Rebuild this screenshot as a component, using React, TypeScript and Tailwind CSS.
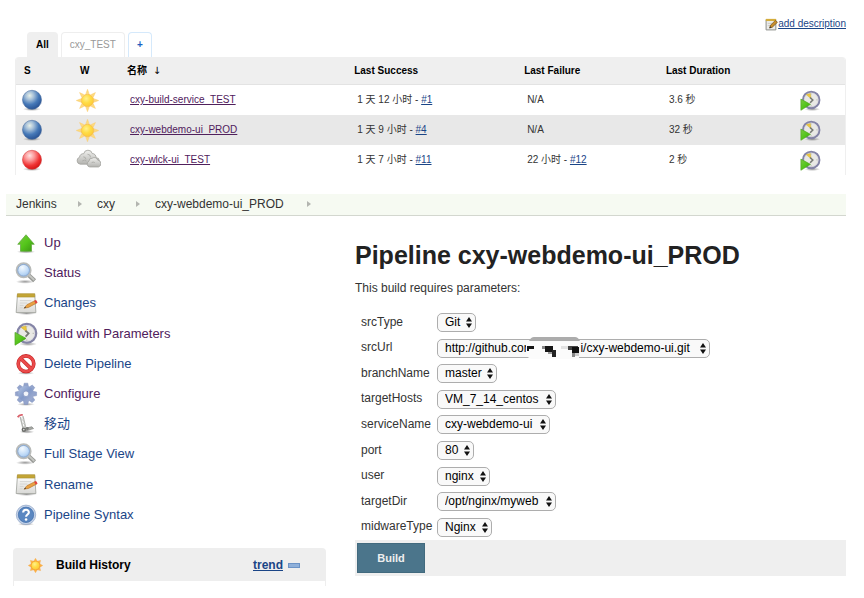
import type { ReactNode } from 'react';

const link = 'text-[#1a4587]';
const visited = 'text-[#50205c]';

function Defs() {
  return (
    <svg className="absolute size-0" aria-hidden="true">
      <defs>
        <radialGradient id="ballBlue" cx="0.38" cy="0.28" r="0.72">
          <stop offset="0" stopColor="#e9f1e8" />
          <stop offset="0.3" stopColor="#a5bfd8" />
          <stop offset="0.65" stopColor="#4679b8" />
          <stop offset="1" stopColor="#2a5596" />
        </radialGradient>
        <radialGradient id="ballRed" cx="0.38" cy="0.28" r="0.74">
          <stop offset="0" stopColor="#ffe2e2" />
          <stop offset="0.35" stopColor="#fb9494" />
          <stop offset="0.7" stopColor="#f03536" />
          <stop offset="1" stopColor="#d41414" />
        </radialGradient>
        <radialGradient id="sunFill" cx="0.4" cy="0.35" r="0.7">
          <stop offset="0" stopColor="#fff08c" />
          <stop offset="0.5" stopColor="#ffdc45" />
          <stop offset="1" stopColor="#fcc636" />
        </radialGradient>
        <linearGradient id="cloudFill" x1="0" y1="0" x2="0" y2="1">
          <stop offset="0" stopColor="#f0f0ee" />
          <stop offset="1" stopColor="#b4b4b0" />
        </linearGradient>
        <radialGradient id="lensFill" cx="0.4" cy="0.3" r="0.8">
          <stop offset="0" stopColor="#f4faff" />
          <stop offset="0.6" stopColor="#bcd8f6" />
          <stop offset="1" stopColor="#8ab4e6" />
        </radialGradient>
        <linearGradient id="greenFill" x1="0" y1="0" x2="1" y2="1">
          <stop offset="0" stopColor="#7cc845" />
          <stop offset="0.5" stopColor="#55c61b" />
          <stop offset="1" stopColor="#3a9312" />
        </linearGradient>
        <linearGradient id="paperFill" x1="0" y1="0" x2="0" y2="1">
          <stop offset="0" stopColor="#ffffff" />
          <stop offset="1" stopColor="#d9d9d6" />
        </linearGradient>
        <linearGradient id="gearFill" x1="0" y1="0" x2="1" y2="1">
          <stop offset="0" stopColor="#b5c6e4" />
          <stop offset="0.5" stopColor="#8299c8" />
          <stop offset="1" stopColor="#aab3d2" />
        </linearGradient>
        <radialGradient id="shadow">
          <stop offset="0" stopColor="#000" stopOpacity="0.4" />
          <stop offset="1" stopColor="#000" stopOpacity="0" />
        </radialGradient>
      </defs>
    </svg>
  );
}

function Icon({ children, className = 'size-[22px]' }: { children: ReactNode; className?: string }) {
  return (
    <svg viewBox="0 0 24 24" className={`block shrink-0 ${className}`} aria-hidden="true">
      {children}
    </svg>
  );
}

function Ball({ color }: { color: 'blue' | 'red' }) {
  return (
    <Icon>
      <ellipse cx="12" cy="22" rx="10" ry="2" fill="url(#shadow)" />
      <circle
        cx="12"
        cy="11.8"
        r="10.4"
        fill={color === 'blue' ? 'url(#ballBlue)' : 'url(#ballRed)'}
        stroke={color === 'blue' ? '#4b6d9c' : '#cf3a3a'}
        strokeWidth="0.6"
      />
    </Icon>
  );
}

function Sun({ className }: { className?: string }) {
  return (
    <Icon className={className}>
      {[0, 45, 90, 135, 180, 225, 270, 315].map((a) => (
        <path key={a} d="M10.3 5 12 0.3 13.7 5z" fill="#fddc7c" stroke="#fbcb75" strokeWidth="0.5" transform={`rotate(${a} 12 12)`} />
      ))}
      <circle cx="12" cy="12" r="6.5" fill="url(#sunFill)" stroke="#f9bb48" strokeWidth="0.8" />
    </Icon>
  );
}

function SmallSun() {
  return (
    <Icon className="size-[15px]">
      {[0, 45, 90, 135, 180, 225, 270, 315].map((a) => (
        <path key={a} d="M9 5.5 12 0.5l3 5z" fill="#fbb64a" stroke="#f6a03a" strokeWidth="0.6" transform={`rotate(${a} 12 12)`} />
      ))}
      <circle cx="12" cy="12" r="7" fill="url(#sunFill)" stroke="#f5a030" strokeWidth="1.4" />
    </Icon>
  );
}

function Cloud() {
  return (
    <Icon className="size-[25px]">
      <g fill="url(#cloudFill)" stroke="#a3a39f" strokeWidth="0.8">
        <path d="M4 15.5a3.4 3.4 0 0 1-.6-6.6 3.5 3.5 0 0 1 4-3.4 4.2 4.2 0 0 1 8.2-.2 3.6 3.6 0 0 1 3.6 4 3 3 0 0 1 .2 6.2z" />
        <path d="M13.2 18.2a2.9 2.9 0 0 1-.8-5.5 3 3 0 0 1 3.2-2.9 3.4 3.4 0 0 1 5.2 1.8 3.4 3.4 0 0 1 .8 6.6z" />
      </g>
      <path d="M7 8.5a2.5 2.5 0 0 1 2.5 2.5M11 6a3 3 0 0 1 3 3M6 12.5a3 3 0 0 1 4 0M15 14a3 3 0 0 1 3 0" fill="none" stroke="#a9a9a5" strokeWidth="0.8" />
    </Icon>
  );
}

function ClockPlay({ className = 'size-[21px]' }: { className?: string }) {
  return (
    <Icon className={className}>
      <ellipse cx="14" cy="22" rx="9" ry="2" fill="url(#shadow)" />
      <circle cx="12.8" cy="11.3" r="9.4" fill="#e9e9e5" stroke="#8484a6" strokeWidth="2.3" />
      <circle cx="12.8" cy="11.3" r="7.9" fill="none" stroke="#d2d2de" strokeWidth="0.7" />
      <path d="M7 5.2 12 4l.8 6z" fill="#edc93f" stroke="#c9ab3a" strokeWidth="0.5" />
      <path d="M11.4 8.6 14.6 11.4l-3 3.2" fill="none" stroke="#777a74" strokeWidth="1.8" />
      <path d="M18.6 11.3h1.4M12.8 17.4v1.4M12.8 4v1.2" stroke="#aaaaa5" strokeWidth="0.8" />
      <path d="M1 10.4 12 16.4 1 23.2z" fill="url(#greenFill)" stroke="#4ba51c" strokeWidth="0.7" />
    </Icon>
  );
}

function UpArrow() {
  return (
    <Icon>
      <ellipse cx="12" cy="21.5" rx="10" ry="2" fill="url(#shadow)" />
      <path d="M12 3 21 13.4h-3V21H6v-7.6H3z" fill="url(#greenFill)" stroke="#5fa63d" strokeWidth="0.8" />
    </Icon>
  );
}

function Magnifier() {
  return (
    <Icon>
      <ellipse cx="11" cy="21.5" rx="10" ry="2.2" fill="url(#shadow)" />
      <path d="m15 14.4 6.4 6" stroke="#979995" strokeWidth="4.6" />
      <path d="m15 14 6 5.6" stroke="#c5c7c3" strokeWidth="2" />
      <circle cx="9.4" cy="9" r="7.4" fill="url(#lensFill)" stroke="#b9bbb9" strokeWidth="2.6" />
      <circle cx="9.4" cy="9" r="6.4" fill="none" stroke="#86abdc" strokeWidth="1" />
    </Icon>
  );
}

function Notepad({ className = 'size-[23px]' }: { className?: string }) {
  return (
    <Icon className={className}>
      <ellipse cx="12" cy="22.4" rx="11" ry="1.5" fill="url(#shadow)" />
      <path d="M2.6 2.6h18l1.2 18.8H1.2z" fill="url(#paperFill)" stroke="#a3a5a0" strokeWidth="0.9" />
      <path d="M2.6 1.7h18v3.6H2.3z" fill="#c3a536" stroke="#a88d2b" strokeWidth="0.6" />
      <path d="M5 9h12M5 11.5h8M5 14h4M5 16.5h3" stroke="#d0d0cd" strokeWidth="0.9" />
      <path d="m9.4 16.9 3-3.6 8.8-4.5 1.6 2.6-8.8 4.7z" fill="#e9a143" stroke="#b5762b" strokeWidth="0.7" />
      <path d="m20 9.4 2-1.1 1.6 2.6-2 1.1z" fill="#e04040" />
      <path d="m9.2 17 1.6-1.8.8 1.3z" fill="#444" />
    </Icon>
  );
}

function EditNote() {
  return (
    <Icon className="size-[13px]">
      <path d="M2 3h18v19H2z" fill="#ececea" stroke="#8b8d88" strokeWidth="1.8" />
      <path d="M1.5 1.6h19v4h-19z" fill="#d4ad3c" />
      <path d="M5 10h8M5 14h5" stroke="#c4c4c0" strokeWidth="1.4" />
      <path d="m8.5 18.5 1.6-5L19 4.5l4 3.4-9.4 9z" fill="#c98f2e" stroke="#6f4f1c" strokeWidth="1.3" />
      <path d="m8.2 19 1.2-3.6 2.6 2.2z" fill="#333" />
    </Icon>
  );
}

function NoEntry() {
  return (
    <Icon>
      <ellipse cx="12" cy="22" rx="9" ry="1.8" fill="url(#shadow)" />
      <circle cx="12" cy="11.7" r="8.5" fill="#fff" stroke="#c62323" strokeWidth="4" />
      <path d="m6 5.8 12 11.8" stroke="#c62323" strokeWidth="4" />
      <circle cx="12" cy="11.7" r="8.5" fill="none" stroke="#ea4b4b" strokeWidth="2.7" />
      <path d="m6 5.8 12 11.8" stroke="#ea4b4b" strokeWidth="2.8" />
    </Icon>
  );
}

function Gear() {
  return (
    <Icon className="size-[24px]">
      <ellipse cx="12" cy="22.3" rx="9" ry="1.6" fill="url(#shadow)" />
      {[0, 45, 90, 135].map((a) => (
        <path key={a} d="M10.2 1.2h3.6l1 5v11.4l-1 4.8h-3.6l-1-4.8V6.2z" fill="#93a4cc" stroke="#8293bf" strokeWidth="0.5" transform={`rotate(${a} 12 11.8)`} />
      ))}
      <circle cx="12" cy="11.8" r="7.8" fill="url(#gearFill)" />
      <circle cx="12" cy="11.8" r="2.8" fill="#f1f4fa" stroke="#8697c2" strokeWidth="0.8" />
    </Icon>
  );
}

function HandTruck() {
  return (
    <Icon>
      <ellipse cx="13" cy="20.5" rx="8" ry="2" fill="url(#shadow)" />
      <path d="M5.8 4.4 9 17.6M8.6 3.4 11.6 16" fill="none" stroke="#b3b5b1" strokeWidth="1.6" />
      <path d="m6.8 8 3-.8M7.8 12l3-.8M8.6 15.4l3-.8" stroke="#c9cac7" strokeWidth="1.2" />
      <path d="M3 4.6Q4.6 1.6 8.4 2.2" fill="none" stroke="#d9606a" strokeWidth="2" />
      <path d="m9.6 17 8.8-2 1.8 2-9.6 2.8z" fill="#a8aaa6" stroke="#7d7f7b" strokeWidth="0.7" />
      <circle cx="9.6" cy="18.2" r="2.4" fill="#6b6d69" />
      <circle cx="9.6" cy="18.2" r="0.9" fill="#ddd" />
      <circle cx="13.4" cy="17" r="1.6" fill="#777975" />
    </Icon>
  );
}

function Help() {
  return (
    <Icon>
      <ellipse cx="12" cy="22" rx="9" ry="1.8" fill="url(#shadow)" />
      <circle cx="12" cy="11.8" r="10.6" fill="#c5d3e8" stroke="#93a7c8" strokeWidth="0.8" />
      <circle cx="12" cy="11.8" r="8.4" fill="#5a87c1" stroke="#3f6dab" strokeWidth="0.8" />
      <path d="M8.9 9.4c0-4.2 6.4-4 6.2-.2-.1 2.3-3 2.3-3 4.8" fill="none" stroke="#fff" strokeWidth="2.3" />
      <circle cx="12.1" cy="17" r="1.4" fill="#fff" />
    </Icon>
  );
}

type Job = { ok: boolean; sunny: boolean; name: string; since: string; run: string; fail: string; failRun?: string; took: string };

const jobs: Job[] = [
  { ok: true, sunny: true, name: 'cxy-build-service_TEST', since: '1 天 12 小时', run: '#1', fail: 'N/A', took: '3.6 秒' },
  { ok: true, sunny: true, name: 'cxy-webdemo-ui_PROD', since: '1 天 9 小时', run: '#4', fail: 'N/A', took: '32 秒' },
  { ok: false, sunny: false, name: 'cxy-wlck-ui_TEST', since: '1 天 7 小时', run: '#11', fail: '22 小时', failRun: '#12', took: '2 秒' },
];

function JobTable() {
  return (
    <table className="w-full table-fixed border-separate border-spacing-0 overflow-hidden rounded-t-[4px] border-x border-[#efefef] text-left text-[10px] leading-[14px] text-[#333]">
      <colgroup>
        <col className="w-[6.4%]" />
        <col className="w-[7%]" />
        <col className="w-[27.4%]" />
        <col className="w-[20.5%]" />
        <col className="w-[17.1%]" />
        <col className="w-[16.2%]" />
        <col />
      </colgroup>
      <thead className="bg-[#efefef] text-black">
        <tr className="h-[28px] *:border-b *:border-[#e3e3e3] *:p-0 *:font-bold">
          <th className="pl-[8px]!">S</th>
          <th className="pl-[11px]!">W</th>
          <th>名称 &nbsp;<span className="font-['DejaVu_Sans'] font-normal">↓</span></th>
          <th>Last Success</th>
          <th>Last Failure</th>
          <th>Last Duration</th>
          <th><span className="sr-only" /></th>
        </tr>
      </thead>
      <tbody>
        {jobs.map((j) => (
          <tr key={j.name} className="h-[30px] even:bg-[#e8e8e8] *:p-0">
            <td className="pl-[5px]!"><Ball color={j.ok ? 'blue' : 'red'} /></td>
            <td className="pl-[7px]!">{j.sunny ? <Sun className="size-[23px]" /> : <Cloud />}</td>
            <td className="pl-[3px]!"><a href="#job" className={`${visited} underline`}>{j.name}</a></td>
            <td className="pl-[3px]!">{j.since} - <a href="#run" className={`${link} underline`}>{j.run}</a></td>
            <td className="pl-[3px]!">
              {j.fail}
              {j.failRun && <> - <a href="#run" className={`${link} underline`}>{j.failRun}</a></>}
            </td>
            <td className="pl-[3px]!">{j.took}</td>
            <td className="pl-0!">
              <button type="button" aria-label="Build" className="mr-[24px] ml-auto block"><ClockPlay /></button>
            </td>
          </tr>
        ))}
      </tbody>
    </table>
  );
}

const tasks = [
  { label: 'Up', icon: <UpArrow />, seen: true },
  { label: 'Status', icon: <Magnifier />, seen: true },
  { label: 'Changes', icon: <Notepad />, seen: false },
  { label: 'Build with Parameters', icon: <ClockPlay className="size-[24px]" />, seen: true },
  { label: 'Delete Pipeline', icon: <NoEntry />, seen: false },
  { label: 'Configure', icon: <Gear />, seen: true },
  { label: '移动', icon: <HandTruck />, seen: false },
  { label: 'Full Stage View', icon: <Magnifier />, seen: false },
  { label: 'Rename', icon: <Notepad />, seen: false },
  { label: 'Pipeline Syntax', icon: <Help />, seen: false },
];

const params = [
  { name: 'srcType', value: 'Git', width: 'w-[39px]' },
  { name: 'srcUrl', value: 'http://github.com/' + '\u00a0'.repeat(13) + 'i/cxy-webdemo-ui.git', width: 'w-[273px]' },
  { name: 'branchName', value: 'master', width: 'w-[60px]' },
  { name: 'targetHosts', value: 'VM_7_14_centos', width: 'w-[119px]' },
  { name: 'serviceName', value: 'cxy-webdemo-ui', width: 'w-[113px]' },
  { name: 'port', value: '80', width: 'w-[37px]' },
  { name: 'user', value: 'nginx', width: 'w-[53px]' },
  { name: 'targetDir', value: '/opt/nginx/myweb', width: 'w-[119px]' },
  { name: 'midwareType', value: 'Nginx', width: 'w-[55px]' },
];

function Mosaic() {
  return (
    <svg viewBox="0 0 56 22" className="pointer-events-none absolute top-[-2px] left-[89px] h-[22px] w-[56px]" aria-hidden="true">
      <path d="M0 5h50l3 2v15H5l-5-3z" fill="#fbfbfb" />
      <path d="M3 4q2-4 5-4h41q3 0 5 4z" fill="#acacac" />
      <path d="M1 9h7v3H3v2H1z" fill="#151515" />
      <path d="M16 9h5v3h-5z" fill="#888" />
      <path d="M19 9h8v6h-8z" fill="#151515" />
      <path d="M26 13h4v7h-4z" fill="#222" />
      <path d="M22 15h4v2h-4z" fill="#999" />
      <path d="M35 9h7v3h-7z" fill="#e2e2e2" />
      <path d="M42 9h10v4H42z" fill="#444" />
      <path d="M46 10h7v6h-7z" fill="#111" />
      <path d="M46 16h3v4h-3z" fill="#888" />
      <path d="M49 16h4v3h-4z" fill="#ccc" />
    </svg>
  );
}

function Separator() {
  return (
    <svg viewBox="0 0 4 6" className="h-[6px] w-[4px]" aria-hidden="true">
      <path d="M0 0 4 3 0 6z" fill="#b3b5b0" />
    </svg>
  );
}

export default function App() {
  return (
    <div className="bg-white pb-[10px] font-['Liberation_Sans','Noto_Sans_CJK_SC',sans-serif] text-[12px] text-[#333]">
      <Defs />
      <section className="pt-[17px] pr-[18px] pl-[15px]">
        <div className="flex justify-end">
          <a href="#description" className={`flex items-center text-[10px] leading-[14px] ${link}`}>
            <EditNote />
            <span className="underline">add description</span>
          </a>
        </div>
        <nav className="mt-[1px] flex gap-[3px] pl-[12px] text-[10px] leading-[25px]" aria-label="Views">
          <a href="#all" className="rounded-t-[4px] bg-[#efefef] px-[9px] font-bold text-black">All</a>
          <a href="#test" className="rounded-t-[4px] border border-b-0 border-[#eee] px-[8px] leading-[24px] text-[#999]">cxy_TEST</a>
          <a href="#new" className="rounded-t-[4px] border border-b-0 border-[#d5e9fb] px-[8px] leading-[24px] font-bold text-[#1d5fc0]">+</a>
        </nav>
        <JobTable />
      </section>

      <nav className="mt-[19px] mr-[18px] ml-[6px] flex h-[22px] items-center border-b border-[#d3d7cf] bg-[#f6faf2] pb-[2px] pl-[10px] text-[#333]" aria-label="Breadcrumb">
        <a href="#jenkins" className="w-[62px]">Jenkins</a>
        <Separator />
        <a href="#cxy" className="ml-[15px] w-[39px]">cxy</a>
        <Separator />
        <a href="#job" className="ml-[15px] w-[152px]">cxy-webdemo-ui_PROD</a>
        <Separator />
      </nav>

      <div className="mr-[18px] flex gap-[29px]">
        <aside className="w-[326px] shrink-0 pt-[12px] pl-[13px]">
          <ul className="grid h-[302px] auto-rows-fr">
            {tasks.map((t) => (
              <li key={t.label} className="flex items-center">
                <a href="#task" className={`flex items-center gap-[5px] text-[13px] leading-[18px] ${t.seen ? visited : link}`}>
                  <span className="flex w-[26px] justify-center">{t.icon}</span>
                  {t.label}
                </a>
              </li>
            ))}
          </ul>
          <div className="mt-[18px] rounded-t-[4px] border border-b-0 border-[#eee]">
            <div className="flex h-[32px] items-center bg-[#eee] pr-[25px] pl-[14px] font-bold">
              <SmallSun />
              <h2 className="ml-[13px] flex-1 text-black">Build History</h2>
              <a href="#trend" className={`${link} underline`}>trend</a>
              <button type="button" aria-label="Collapse" className="ml-[5px] h-[5px] w-[12px] border border-[#6c93c6] bg-[#8fb0da]" />
            </div>
            <div className="h-[5px]" />
          </div>
        </aside>

        <main className="min-w-0 flex-1 pt-[22px]">
          <h1 className="text-[25px] leading-[34px] font-bold text-[#222]">Pipeline cxy-webdemo-ui_PROD</h1>
          <p className="mt-[8px] leading-[16px]">This build requires parameters:</p>
          <form>
            <div className="mt-[14px] grid h-[230px] auto-rows-fr pl-[6px]">
              {params.map((p) => (
                <div key={p.name} className="flex items-center">
                  <label htmlFor={p.name} className="w-[76px] pb-[2px]">{p.name}</label>
                  <div className="relative">
                    <select
                      id={p.name}
                      className={`block h-[19px] appearance-none rounded-[5px] border border-[#adadad] bg-[#f9f9f9] pl-[7px] text-[12px] leading-[17px] text-black ${p.width}`}
                    >
                      <option>{p.value}</option>
                    </select>
                    <svg viewBox="0 0 6 11" className="pointer-events-none absolute top-[4px] right-[4px] h-[11px] w-[6px]" aria-hidden="true">
                      <path d="M3 0 6 4.5H0zM0 6.5h6L3 11z" fill="#111" />
                    </svg>
                    {p.name === 'srcUrl' && <Mosaic />}
                  </div>
                </div>
              ))}
            </div>
            <div className="bg-[#efefef] px-[2px] py-[3px]">
              <button type="button" className="block h-[30px] w-[68px] border border-[#426a7e] bg-[#4b758b] text-[11px] font-bold text-[#eee]">Build</button>
            </div>
          </form>
        </main>
      </div>
    </div>
  );
}
